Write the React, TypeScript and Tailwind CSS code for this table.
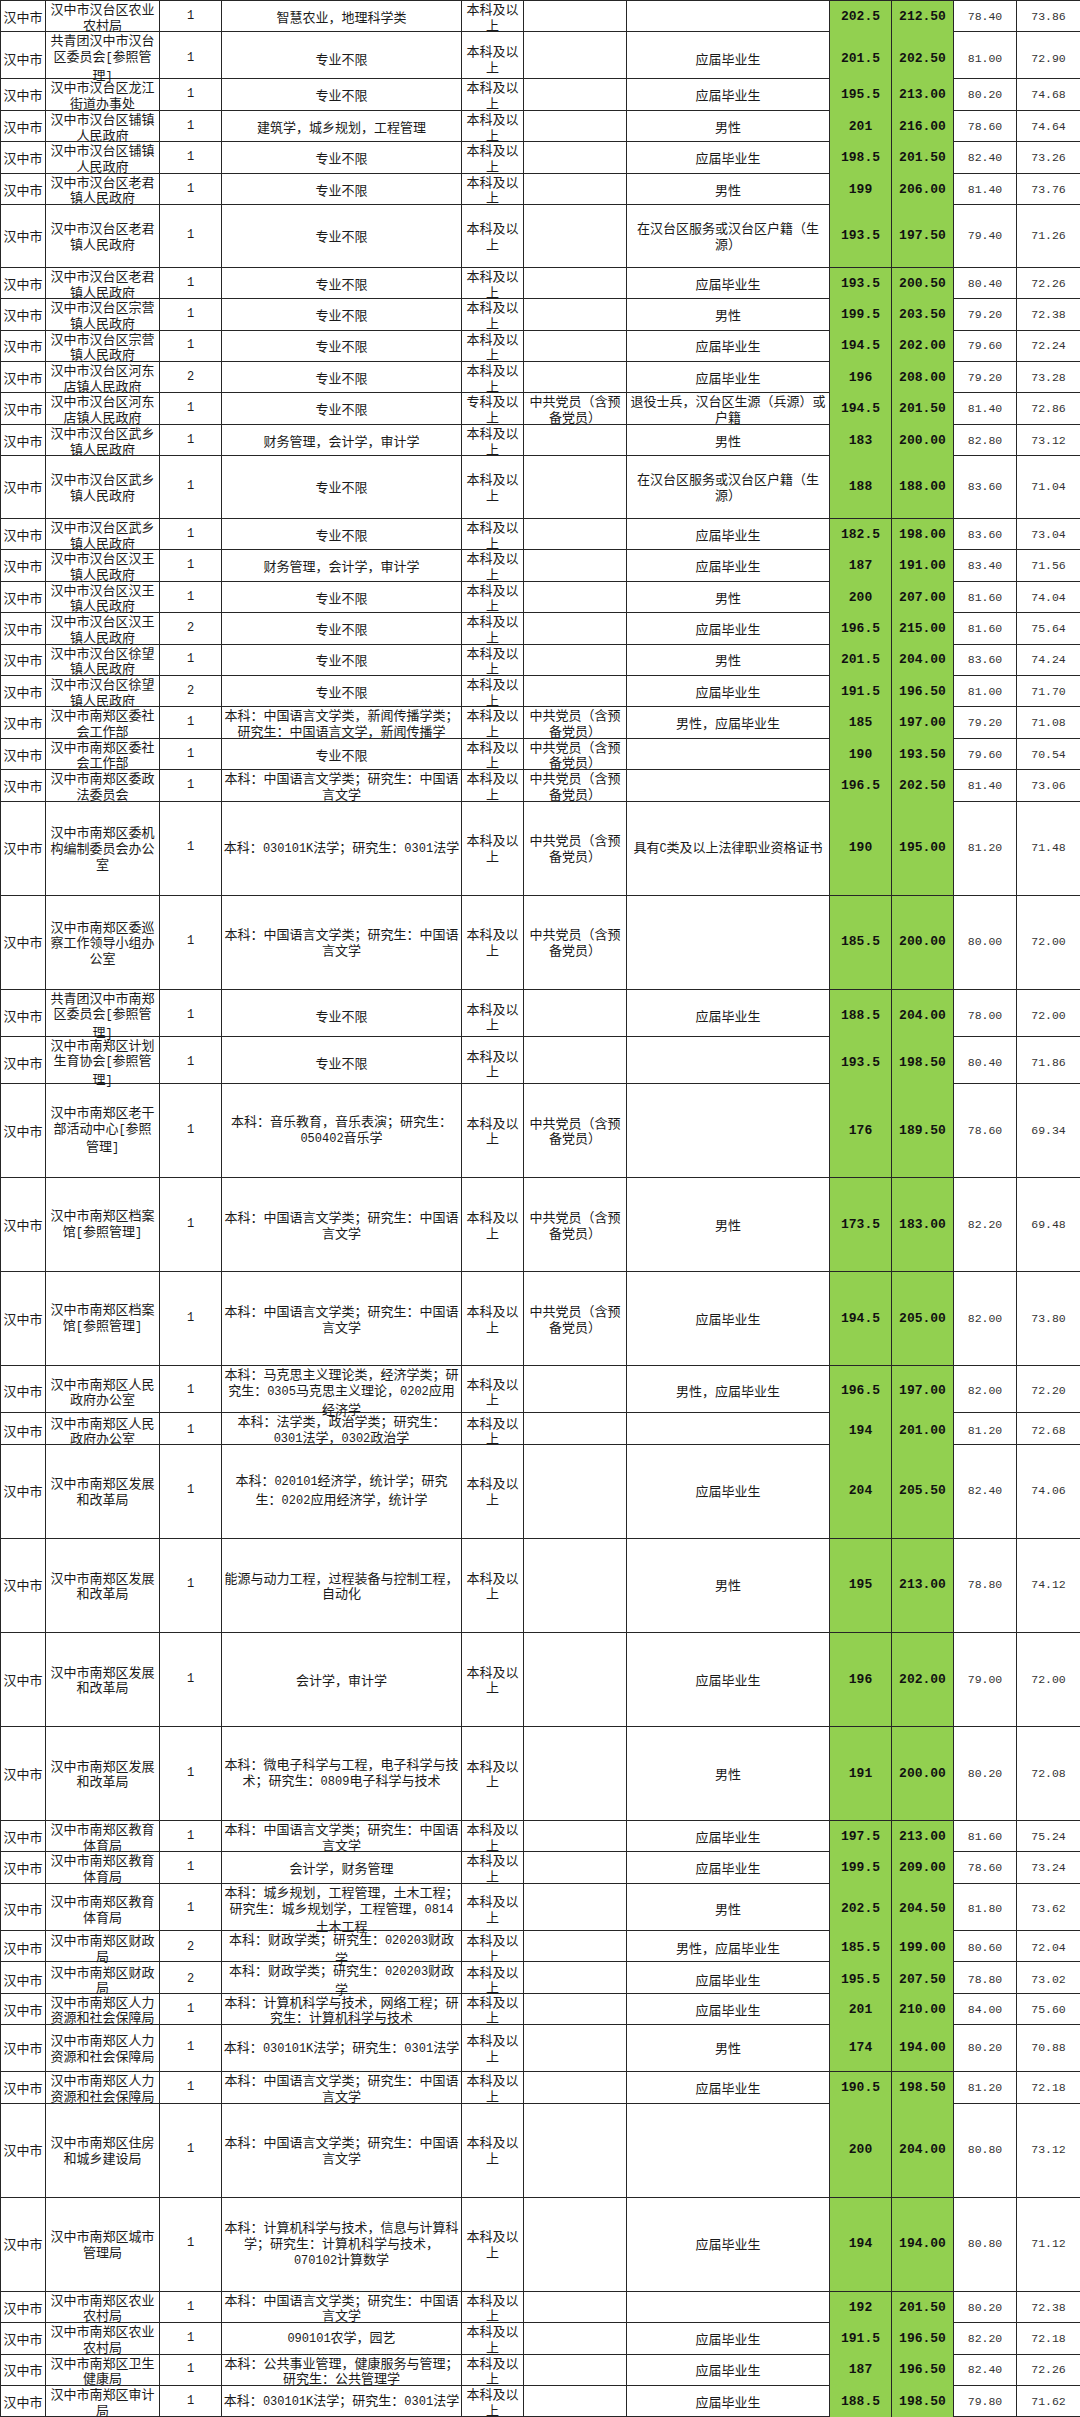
const cols =
  "grid grid-cols-[45px_114px_62px_240px_62px_103px_203px_62px_62px_63px_64px]";

const rowHeight: Record<number, string> = {
  2: "h-[31.4px]",
  3: "h-[47.1px]",
  4: "h-[62.8px]",
  6: "h-[94.1px]",
};

const cellClass =
  "flex items-center justify-center border-r border-[#262626] text-center whitespace-pre leading-[15.7px] overflow-visible";

// common cell texts
const BX = "专业不限";
const YJ = "应届毕业生";
const NX = "男性";
const DY = "中共党员（含预\n备党员）";
const FW = "在汉台区服务或汉台区户籍（生\n源）";
const ZW = "本科：中国语言文学类；研究生：中国语\n言文学";
const FX = "本科：030101K法学；研究生：0301法学";
const CZ = "本科：财政学类；研究生：020203财政\n学";
const BK = "本科及以\n上";

const HT = "汉中市汉台区";
const NZ = "汉中市南郑区";

type Row = [number, string, string, string, string, string, string, string, string, string, string];

const rows: Row[] = [
  [2, HT + "农业\n农村局", "1", "智慧农业，地理科学类", BK, "", "", "202.5", "212.50", "78.40", "73.86"],
  [3, "共青团汉中市汉台\n区委员会[参照管\n理]", "1", BX, BK, "", YJ, "201.5", "202.50", "81.00", "72.90"],
  [2, HT + "龙江\n街道办事处", "1", BX, BK, "", YJ, "195.5", "213.00", "80.20", "74.68"],
  [2, HT + "铺镇\n人民政府", "1", "建筑学，城乡规划，工程管理", BK, "", NX, "201", "216.00", "78.60", "74.64"],
  [2, HT + "铺镇\n人民政府", "1", BX, BK, "", YJ, "198.5", "201.50", "82.40", "73.26"],
  [2, HT + "老君\n镇人民政府", "1", BX, BK, "", NX, "199", "206.00", "81.40", "73.76"],
  [4, HT + "老君\n镇人民政府", "1", BX, BK, "", FW, "193.5", "197.50", "79.40", "71.26"],
  [2, HT + "老君\n镇人民政府", "1", BX, BK, "", YJ, "193.5", "200.50", "80.40", "72.26"],
  [2, HT + "宗营\n镇人民政府", "1", BX, BK, "", NX, "199.5", "203.50", "79.20", "72.38"],
  [2, HT + "宗营\n镇人民政府", "1", BX, BK, "", YJ, "194.5", "202.00", "79.60", "72.24"],
  [2, HT + "河东\n店镇人民政府", "2", BX, BK, "", YJ, "196", "208.00", "79.20", "73.28"],
  [2, HT + "河东\n店镇人民政府", "1", BX, "专科及以\n上", DY, "退役士兵，汉台区生源（兵源）或\n户籍", "194.5", "201.50", "81.40", "72.86"],
  [2, HT + "武乡\n镇人民政府", "1", "财务管理，会计学，审计学", BK, "", NX, "183", "200.00", "82.80", "73.12"],
  [4, HT + "武乡\n镇人民政府", "1", BX, BK, "", FW, "188", "188.00", "83.60", "71.04"],
  [2, HT + "武乡\n镇人民政府", "1", BX, BK, "", YJ, "182.5", "198.00", "83.60", "73.04"],
  [2, HT + "汉王\n镇人民政府", "1", "财务管理，会计学，审计学", BK, "", YJ, "187", "191.00", "83.40", "71.56"],
  [2, HT + "汉王\n镇人民政府", "1", BX, BK, "", NX, "200", "207.00", "81.60", "74.04"],
  [2, HT + "汉王\n镇人民政府", "2", BX, BK, "", YJ, "196.5", "215.00", "81.60", "75.64"],
  [2, HT + "徐望\n镇人民政府", "1", BX, BK, "", NX, "201.5", "204.00", "83.60", "74.24"],
  [2, HT + "徐望\n镇人民政府", "2", BX, BK, "", YJ, "191.5", "196.50", "81.00", "71.70"],
  [2, NZ + "委社\n会工作部", "1", "本科：中国语言文学类，新闻传播学类；\n研究生：中国语言文学，新闻传播学", BK, DY, "男性，应届毕业生", "185", "197.00", "79.20", "71.08"],
  [2, NZ + "委社\n会工作部", "1", BX, BK, DY, "", "190", "193.50", "79.60", "70.54"],
  [2, NZ + "委政\n法委员会", "1", ZW, BK, DY, "", "196.5", "202.50", "81.40", "73.06"],
  [6, NZ + "委机\n构编制委员会办公\n室", "1", FX, BK, DY, "具有C类及以上法律职业资格证书", "190", "195.00", "81.20", "71.48"],
  [6, NZ + "委巡\n察工作领导小组办\n公室", "1", ZW, BK, DY, "", "185.5", "200.00", "80.00", "72.00"],
  [3, "共青团汉中市南郑\n区委员会[参照管\n理]", "1", BX, BK, "", YJ, "188.5", "204.00", "78.00", "72.00"],
  [3, NZ + "计划\n生育协会[参照管\n理]", "1", BX, BK, "", "", "193.5", "198.50", "80.40", "71.86"],
  [6, NZ + "老干\n部活动中心[参照\n管理]", "1", "本科：音乐教育，音乐表演；研究生：\n050402音乐学", BK, DY, "", "176", "189.50", "78.60", "69.34"],
  [6, NZ + "档案\n馆[参照管理]", "1", ZW, BK, DY, NX, "173.5", "183.00", "82.20", "69.48"],
  [6, NZ + "档案\n馆[参照管理]", "1", ZW, BK, DY, YJ, "194.5", "205.00", "82.00", "73.80"],
  [3, NZ + "人民\n政府办公室", "1", "本科：马克思主义理论类，经济学类；研\n究生：0305马克思主义理论，0202应用\n经济学", BK, "", "男性，应届毕业生", "196.5", "197.00", "82.00", "72.20"],
  [2, NZ + "人民\n政府办公室", "1", "本科：法学类，政治学类；研究生：\n0301法学，0302政治学", BK, "", "", "194", "201.00", "81.20", "72.68"],
  [6, NZ + "发展\n和改革局", "1", "本科：020101经济学，统计学；研究\n生：0202应用经济学，统计学", BK, "", YJ, "204", "205.50", "82.40", "74.06"],
  [6, NZ + "发展\n和改革局", "1", "能源与动力工程，过程装备与控制工程，\n自动化", BK, "", NX, "195", "213.00", "78.80", "74.12"],
  [6, NZ + "发展\n和改革局", "1", "会计学，审计学", BK, "", YJ, "196", "202.00", "79.00", "72.00"],
  [6, NZ + "发展\n和改革局", "1", "本科：微电子科学与工程，电子科学与技\n术；研究生：0809电子科学与技术", BK, "", NX, "191", "200.00", "80.20", "72.08"],
  [2, NZ + "教育\n体育局", "1", ZW, BK, "", YJ, "197.5", "213.00", "81.60", "75.24"],
  [2, NZ + "教育\n体育局", "1", "会计学，财务管理", BK, "", YJ, "199.5", "209.00", "78.60", "73.24"],
  [3, NZ + "教育\n体育局", "1", "本科：城乡规划，工程管理，土木工程；\n研究生：城乡规划学，工程管理，0814\n土木工程", BK, "", NX, "202.5", "204.50", "81.80", "73.62"],
  [2, NZ + "财政\n局", "2", CZ, BK, "", "男性，应届毕业生", "185.5", "199.00", "80.60", "72.04"],
  [2, NZ + "财政\n局", "2", CZ, BK, "", YJ, "195.5", "207.50", "78.80", "73.02"],
  [2, NZ + "人力\n资源和社会保障局", "1", "本科：计算机科学与技术，网络工程；研\n究生：计算机科学与技术", BK, "", YJ, "201", "210.00", "84.00", "75.60"],
  [3, NZ + "人力\n资源和社会保障局", "1", FX, BK, "", NX, "174", "194.00", "80.20", "70.88"],
  [2, NZ + "人力\n资源和社会保障局", "1", ZW, BK, "", YJ, "190.5", "198.50", "81.20", "72.18"],
  [6, NZ + "住房\n和城乡建设局", "1", ZW, BK, "", "", "200", "204.00", "80.80", "73.12"],
  [6, NZ + "城市\n管理局", "1", "本科：计算机科学与技术，信息与计算科\n学；研究生：计算机科学与技术，\n070102计算数学", BK, "", YJ, "194", "194.00", "80.80", "71.12"],
  [2, NZ + "农业\n农村局", "1", ZW, BK, "", "", "192", "201.50", "80.20", "72.38"],
  [2, NZ + "农业\n农村局", "1", "090101农学，园艺", BK, "", YJ, "191.5", "196.50", "82.20", "72.18"],
  [2, NZ + "卫生\n健康局", "1", "本科：公共事业管理，健康服务与管理；\n研究生：公共管理学", BK, "", YJ, "187", "196.50", "82.40", "72.26"],
  [2, NZ + "审计\n局", "1", FX, BK, "", YJ, "188.5", "198.50", "79.80", "71.62"],
];

// Latin runs (digits, letters, brackets) use a narrow half-width face like the sheet's SimSun
function Txt({ s }: { s: string }) {
  const parts = s.split(/([0-9A-Za-z.\[\]]+)/);
  return (
    <span>
      {parts.map((p, i) =>
        i % 2 === 1 ? (
          <span key={i} className="font-['Liberation_Mono',monospace] text-[12px]">
            {p}
          </span>
        ) : (
          p
        )
      )}
    </span>
  );
}

function TableRow({ row }: { row: Row }) {
  const [units, dept, count, major, edu, pol, other, s1, s2, s3, s4] = row;
  return (
    <div className={`${cols} ${rowHeight[units]} border-b border-[#262626]`}>
      <div className={cellClass}>汉中市</div>
      <div className={cellClass}>
        <Txt s={dept} />
      </div>
      <div className={`${cellClass} font-['Liberation_Mono',monospace] text-[12px]`}>{count}</div>
      <div className={cellClass}>
        <Txt s={major} />
      </div>
      <div className={cellClass}>{edu}</div>
      <div className={cellClass}>{pol}</div>
      <div className={cellClass}>
        <Txt s={other} />
      </div>
      <div className={`${cellClass} bg-[#92d050] font-['Liberation_Mono',monospace] text-[13px] font-bold text-[#111]`}>
        {s1}
      </div>
      <div className={`${cellClass} bg-[#92d050] font-['Liberation_Mono',monospace] text-[13px] font-bold text-[#111]`}>
        {s2}
      </div>
      <div className={`${cellClass} font-['Liberation_Mono',monospace] text-[11.5px] text-[#333]`}>{s3}</div>
      <div className={`${cellClass} font-['Liberation_Mono',monospace] text-[11.5px] text-[#333]`}>{s4}</div>
    </div>
  );
}

export default function App() {
  return (
    <div className="w-[1080px] bg-white font-['Noto_Sans_CJK_SC',sans-serif] text-[13px] text-[#1a1a1a]">
      <div className="border-l border-t border-[#262626]">
        {rows.map((row, i) => (
          <TableRow key={i} row={row} />
        ))}
      </div>
    </div>
  );
}
